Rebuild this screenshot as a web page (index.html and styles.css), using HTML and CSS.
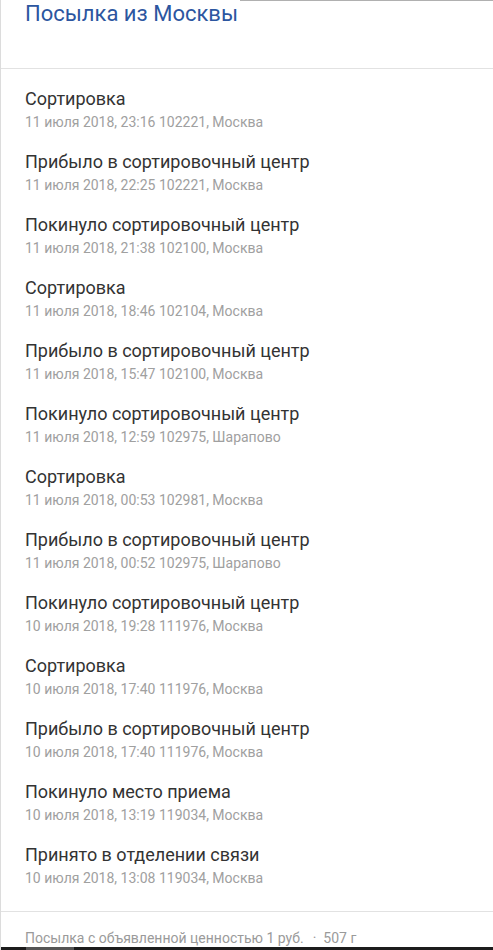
FILE: index.html
```
<!DOCTYPE html>
<html lang="ru">
<head>
<meta charset="utf-8">
<link rel="stylesheet" href="styles.css">
</head>
<body>
<div class="page">
  <header class="head">
    <h1 class="title">Посылка из Москвы</h1>
    <div class="topline"></div>
  </header>
  <ul class="list">
    <li class="item"><div class="ev">Сортировка</div><div class="meta">11 июля 2018, 23:16 102221, Москва</div></li>
    <li class="item"><div class="ev">Прибыло в сортировочный центр</div><div class="meta">11 июля 2018, 22:25 102221, Москва</div></li>
    <li class="item"><div class="ev">Покинуло сортировочный центр</div><div class="meta">11 июля 2018, 21:38 102100, Москва</div></li>
    <li class="item"><div class="ev">Сортировка</div><div class="meta">11 июля 2018, 18:46 102104, Москва</div></li>
    <li class="item"><div class="ev">Прибыло в сортировочный центр</div><div class="meta">11 июля 2018, 15:47 102100, Москва</div></li>
    <li class="item"><div class="ev">Покинуло сортировочный центр</div><div class="meta">11 июля 2018, 12:59 102975, Шарапово</div></li>
    <li class="item"><div class="ev">Сортировка</div><div class="meta">11 июля 2018, 00:53 102981, Москва</div></li>
    <li class="item"><div class="ev">Прибыло в сортировочный центр</div><div class="meta">11 июля 2018, 00:52 102975, Шарапово</div></li>
    <li class="item"><div class="ev">Покинуло сортировочный центр</div><div class="meta">10 июля 2018, 19:28 111976, Москва</div></li>
    <li class="item"><div class="ev">Сортировка</div><div class="meta">10 июля 2018, 17:40 111976, Москва</div></li>
    <li class="item"><div class="ev">Прибыло в сортировочный центр</div><div class="meta">10 июля 2018, 17:40 111976, Москва</div></li>
    <li class="item"><div class="ev">Покинуло место приема</div><div class="meta">10 июля 2018, 13:19 119034, Москва</div></li>
    <li class="item"><div class="ev">Принято в отделении связи</div><div class="meta">10 июля 2018, 13:08 119034, Москва</div></li>
  </ul>
  <footer class="foot">Посылка с объявленной ценностью 1 руб.<span class="dot">·</span>507 г</footer>
  <div class="bottombar"><span class="thumb"></span></div>
</div>
</body>
</html>
```
FILE: styles.css
```
* { box-sizing: border-box; }
html, body { margin: 0; padding: 0; background: #fff; }
body { font-family: Roboto, "Noto Sans", Arial, sans-serif; }
.page {
  width: 493px;
  height: 950px;
  border-left: 1px solid #dcdcdc;
  display: flex;
  flex-direction: column;
  overflow: hidden;
}
.head {
  flex-shrink: 0;
  height: 69px;
  display: flex;
  align-items: flex-start;
  border-bottom: 1px solid #e2e2e2;
}
.title {
  margin: 0;
  padding-left: 24px;
  font-size: 22px;
  font-weight: 400;
  line-height: 28px;
  color: #2c56a0;
  white-space: nowrap;
}
.topline {
  flex: 1;
  margin-left: 2px;
  border-top: 1px solid #b0b0b0;
}
.list {
  flex-shrink: 0;
  list-style: none;
  margin: 0;
  padding: 19px 0 24px 24px;
  display: flex;
  flex-direction: column;
  gap: 20px;
}
.ev {
  font-size: 18px;
  line-height: 22px;
  color: #333;
}
.meta {
  margin-top: 3px;
  font-size: 14px;
  line-height: 18px;
  color: #a0a0a0;
}
.foot {
  flex: 1;
  border-top: 1px solid #e2e2e2;
  padding: 17px 0 0 24px;
  font-size: 14px;
  line-height: 18px;
  color: #9a9a9a;
}
.dot { margin: 0 7px 0 9px; }
.bottombar {
  flex-shrink: 0;
  height: 3px;
  background: #1c1c1c;
  display: flex;
  padding-left: 25px;
}
.thumb {
  width: 48px;
  background: #555;
}
```
